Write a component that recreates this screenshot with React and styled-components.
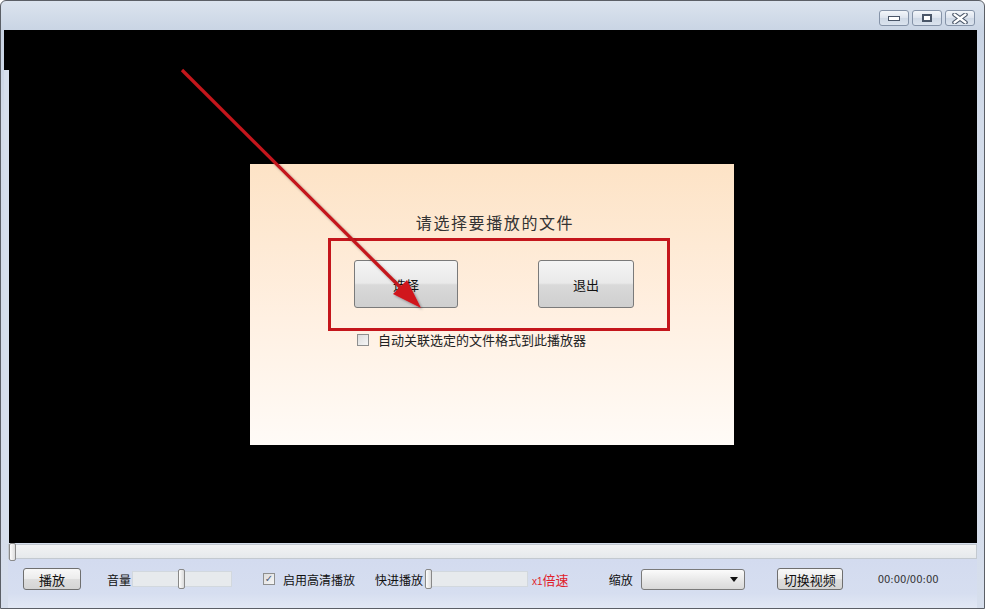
import React from 'react'
import styled, { createGlobalStyle } from 'styled-components'

const Global = createGlobalStyle`
  html, body { margin: 0; padding: 0; background: #fff; }
  body { font-family: "Noto Sans CJK SC", "Liberation Sans", sans-serif; }
  * { box-sizing: border-box; }
`

function WinButton({ kind }) {
  return (
    <WinBtn>
      {kind === 'min' && (
        <svg width="12" height="6" viewBox="0 0 12 6">
          <rect x="0.5" y="1.5" width="11" height="4" fill="#fff" stroke="#4a5668" />
        </svg>
      )}
      {kind === 'max' && (
        <svg width="10" height="8" viewBox="0 0 10 8">
          <rect x="1" y="1" width="8" height="6" fill="#fff" stroke="#4a5668" strokeWidth="2" />
        </svg>
      )}
      {kind === 'close' && (
        <svg width="16" height="11" viewBox="0 0 16 11">
          <path d="M2.5 1.5 L13.5 9.5 M13.5 1.5 L2.5 9.5" stroke="#4a5668" strokeWidth="4.5" strokeLinecap="round" />
          <path d="M2.5 1.5 L13.5 9.5 M13.5 1.5 L2.5 9.5" stroke="#fff" strokeWidth="2.2" strokeLinecap="round" />
        </svg>
      )}
    </WinBtn>
  )
}

function Slider({ width, pos }) {
  return (
    <Track $w={width}>
      <Thumb style={{ left: pos }} />
    </Track>
  )
}

function App() {
  return (
    <>
      <Global />
      <Window>
        <TitleBar>
          <WinButton kind="min" />
          <WinButton kind="max" />
          <WinButton kind="close" />
        </TitleBar>

        <Video>
          <Dialog>
            <DialogTitle>请选择要播放的文件</DialogTitle>
            <ButtonRow>
              <BigButton $w={104}>选择</BigButton>
              <BigButton $w={96}>退出</BigButton>
            </ButtonRow>
            <OptionRow>
              <Box />
              <span>自动关联选定的文件格式到此播放器</span>
            </OptionRow>
          </Dialog>
        </Video>

        <SeekBar>
          <SeekThumb />
        </SeekBar>

        <ControlBar>
          <SmallButton $w={58} $ml={15}>播放</SmallButton>
          <Label $ml={26}>音量</Label>
          <Slider width={100} pos={45} />
          <Check $ml={31}>✓</Check>
          <Label $ml={8}>启用高清播放</Label>
          <Label $ml={20}>快进播放</Label>
          <Slider width={104} pos={0} />
          <Speed><small>x1</small>倍速</Speed>
          <Label $ml={40}>缩放</Label>
          <Select>
            <svg width="8" height="5" viewBox="0 0 8 5"><path d="M0 0 H8 L4 5 Z" fill="#111" /></svg>
          </Select>
          <SmallButton $w={66} $ml={32}>切换视频</SmallButton>
          <Time>00:00/00:00</Time>
        </ControlBar>

        <Overlay width="985" height="610" viewBox="0 0 985 610">
          <defs>
            <filter id="sh" x="-10%" y="-10%" width="120%" height="120%">
              <feDropShadow dx="1.5" dy="1.5" stdDeviation="1.2" floodColor="#000" floodOpacity="0.35" />
            </filter>
          </defs>
          <rect x="329.5" y="239.5" width="339" height="90" fill="none" stroke="#c4161c" strokeWidth="3" />
          <g filter="url(#sh)">
            <line x1="182" y1="70" x2="402" y2="289" stroke="#c4161c" strokeWidth="3.2" />
            <polygon points="421,308 393,294 407,280" fill="#d0161c" />
          </g>
        </Overlay>
      </Window>
    </>
  )
}

export default App

const Window = styled.div`
  position: relative;
  width: 985px;
  height: 609px;
  border: 1px solid #5b5f66;
  border-radius: 6px 6px 0 0;
  background: linear-gradient(#dbe3ee, #c9d4e4 30px, #d3dcea 120px, #d6deec);
  display: flex;
  flex-direction: column;
  overflow: hidden;
`

const TitleBar = styled.div`
  height: 29px;
  display: flex;
  justify-content: flex-end;
  align-items: flex-start;
  gap: 3px;
  padding: 9px 9px 0 0;
`

const WinBtn = styled.div`
  width: 30px;
  height: 16px;
  border: 1px solid #8593a8;
  border-radius: 3px;
  background: linear-gradient(#f3f6fa, #dde4ee 50%, #cfd9e6 51%, #dbe3ee);
  display: flex;
  align-items: center;
  justify-content: center;
`

const Video = styled.div`
  position: relative;
  flex: 1;
  margin: 0 7px 0 3px;
  background: #000;
  display: flex;
  justify-content: center;
  align-items: flex-start;
  padding: 134px 0 0 3px;

  &::before {
    content: '';
    position: absolute;
    left: 0;
    top: 40px;
    bottom: 0;
    width: 5px;
    background: #d6dfec;
  }
`

const Dialog = styled.div`
  width: 484px;
  height: 281px;
  background: linear-gradient(#fde3c6, #fff0e2 55%, #fffbf7);
  display: flex;
  flex-direction: column;
  padding-top: 48px;
  color: #222;
`

const DialogTitle = styled.div`
  text-align: center;
  font-size: 16px;
  line-height: 20px;
  color: #333;
  letter-spacing: 1.6px;
  padding-left: 6px;
`

const ButtonRow = styled.div`
  display: flex;
  gap: 80px;
  padding-left: 104px;
  margin-top: 28px;
`

const BigButton = styled.div`
  width: ${p => p.$w}px;
  height: 48px;
  border: 1px solid #7a7a7a;
  border-radius: 3px;
  background: linear-gradient(#f4f4f4, #e9e9e9 48%, #d9d9d9 52%, #cfcfcf);
  display: flex;
  align-items: center;
  justify-content: center;
  font-size: 13px;
  color: #111;
`

const OptionRow = styled.div`
  display: flex;
  align-items: center;
  gap: 9px;
  padding-left: 107px;
  margin-top: 22px;
  font-size: 13px;
  color: #222;
`

const Box = styled.div`
  width: 12px;
  height: 12px;
  border: 1px solid #8e8f8f;
  background: linear-gradient(135deg, #dcdcdc, #f6f6f6);
`

const SeekBar = styled.div`
  position: relative;
  height: 15px;
  margin: 1px 7px 0 7px;
  border: 1px solid #c3c9d0;
  background: linear-gradient(#f2f3f4, #e6e9ec);
`

const SeekThumb = styled.div`
  position: absolute;
  left: 0;
  top: -2px;
  width: 7px;
  height: 18px;
  border: 1px solid #8a8a8a;
  border-radius: 2px;
  background: linear-gradient(90deg, #fdfdfd, #dcdcdc);
`

const ControlBar = styled.div`
  height: 49px;
  margin: 0 7px;
  display: flex;
  align-items: center;
  padding-bottom: 9px;
  background: linear-gradient(#d3dbef, #d6def0 70%, #e2e8f4);
  font-size: 12px;
  color: #111;
`

const SmallButton = styled.div`
  width: ${p => p.$w}px;
  height: 22px;
  margin-left: ${p => p.$ml}px;
  border: 1px solid #6f6f6f;
  border-radius: 3px;
  background: linear-gradient(#f8f8f8, #ececec 50%, #dedede 51%, #d4d4d4);
  display: flex;
  align-items: center;
  justify-content: center;
  font-size: 13px;
`

const Label = styled.span`
  margin-left: ${p => p.$ml}px;
  white-space: nowrap;
  font-size: 12px;
`

const Track = styled.div`
  position: relative;
  width: ${p => p.$w}px;
  height: 16px;
  margin-left: 1px;
  border: 1px solid #d2d8de;
  background: #e7eaed;
`

const Thumb = styled.div`
  position: absolute;
  top: -3px;
  width: 7px;
  height: 20px;
  border: 1px solid #888;
  border-radius: 2px;
  background: linear-gradient(90deg, #fefefe, #dadada);
`

const Check = styled.div`
  width: 12px;
  height: 12px;
  margin-left: ${p => p.$ml}px;
  border: 1px solid #8e8f8f;
  background: linear-gradient(135deg, #dcdcdc, #f6f6f6);
  font-size: 10px;
  line-height: 10px;
  color: #4a5a78;
  text-align: center;
  font-family: "DejaVu Sans", sans-serif;
`

const Speed = styled.span`
  margin-left: 4px;
  color: #e0202a;
  font-size: 13px;
  white-space: nowrap;

  small {
    font-size: 10px;
    font-family: "Liberation Sans", sans-serif;
  }
`

const Select = styled.div`
  width: 104px;
  height: 21px;
  margin-left: 8px;
  border: 1px solid #7a7a7a;
  border-radius: 3px;
  background: linear-gradient(#fbfbfb, #e9e9e9 50%, #d9d9d9);
  display: flex;
  align-items: center;
  justify-content: flex-end;
  padding-right: 6px;
`

const Time = styled.span`
  margin-left: 35px;
  font-family: "DejaVu Sans", sans-serif;
  font-size: 10px;
  color: #333;
`

const Overlay = styled.svg`
  position: absolute;
  left: -1px;
  top: -1px;
  pointer-events: none;
`
